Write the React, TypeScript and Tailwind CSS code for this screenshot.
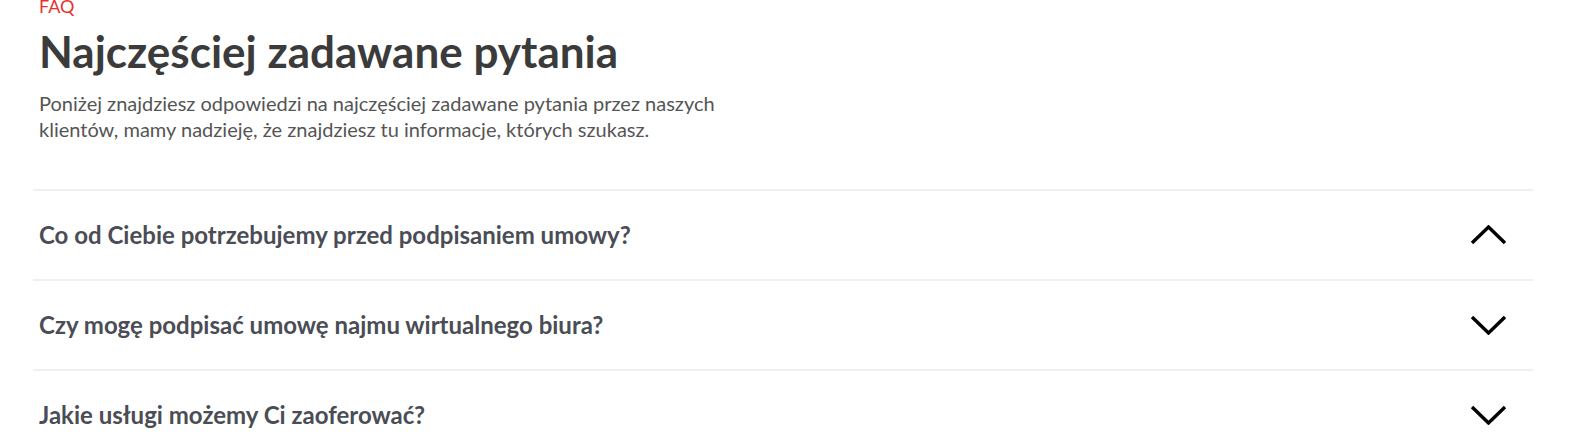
import React from 'react';

const questions = [
  { q: 'Co od Ciebie potrzebujemy przed podpisaniem umowy?', open: true },
  { q: 'Czy mogę podpisać umowę najmu wirtualnego biura?', open: false },
  { q: 'Jakie usługi możemy Ci zaoferować?', open: false },
];

const Chevron: React.FC<{ up: boolean }> = ({ up }) => (
  <svg width="37" height="20" viewBox="0 0 37 20" fill="none" className="block">
    {up ? (
      <path d="M2 18 L18.5 2 L35 18" stroke="#000" strokeWidth="3.4" />
    ) : (
      <path d="M2 2 L18.5 18 L35 2" stroke="#000" strokeWidth="3.4" />
    )}
  </svg>
);

export default function App() {
  return (
    <div className="bg-white min-h-screen pl-[33px] pr-[39px] overflow-hidden" style={{ fontFamily: 'Lato, "Open Sans", sans-serif' }}>
      <div className="pl-[6px]">
        <div className="-mt-[5px] text-[18px] leading-[22px] text-[#e8312f]">FAQ</div>
        <h1 className="mt-[8px] text-[44px] leading-[53px] font-bold text-[#3b3b3b]">
          Najczęściej zadawane pytania
        </h1>
        <p className="mt-[12px] max-w-[720px] text-[20px] leading-[26px] text-[#555]">
          Poniżej znajdziesz odpowiedzi na najczęściej zadawane pytania przez naszych klientów, mamy nadzieję, że znajdziesz tu informacje, których szukasz.
        </p>
      </div>
      <div className="mt-[47px]">
        {questions.map((item) => (
          <div key={item.q} className="border-t-2 border-[#f0f0f0] h-[90px] flex items-center justify-between pl-[6px] pr-[26px]">
            <span className="text-[24px] font-bold text-[#4a4d55]">{item.q}</span>
            <Chevron up={item.open} />
          </div>
        ))}
      </div>
    </div>
  );
}
